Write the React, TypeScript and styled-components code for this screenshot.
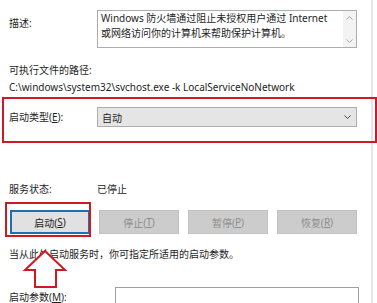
import React from 'react'
import styled, { createGlobalStyle, css } from 'styled-components'

const GlobalStyle = createGlobalStyle`
  html, body {
    margin: 0;
    padding: 0;
    background: #ffffff;
  }
  body {
    font-family: 'Noto Sans', 'Noto Sans CJK SC', sans-serif;
    font-size: 10px;
    color: #1e1e1e;
  }
`

const RED = '#cc1b24'

const Page = styled.div`
  position: relative;
  width: 377px;
  height: 303px;
  overflow: hidden;
  background: #fff;
`

const Panel = styled.div`
  width: 371px;
  height: 303px;
  border-right: 2px solid #e6e6e6;
  display: flex;
  flex-direction: column;
`

const Row = styled.div<{ $top?: number }>`
  display: flex;
  align-items: flex-start;
  padding-left: 9px;
  margin-top: ${(p) => p.$top ?? 0}px;
`

const Label = styled.div<{ $pad?: number }>`
  width: 88px;
  flex: none;
  line-height: 17px;
  padding-top: ${(p) => p.$pad ?? 0}px;
  white-space: nowrap;
`

const Line = styled.div<{ $top?: number }>`
  padding-left: 9px;
  line-height: 17px;
  margin-top: ${(p) => p.$top ?? 0}px;
  white-space: nowrap;
`

const DescBox = styled.div`
  width: 258px;
  height: 36px;
  border: 1px solid #adadad;
  display: flex;
`

const DescText = styled.div`
  flex: 1;
  padding: 0 0 0 3px;
  line-height: 15px;
  white-space: nowrap;
  overflow: hidden;
`

const ScrollBar = styled.div`
  width: 13px;
  background: #f3f3f3;
  display: flex;
  flex-direction: column;
  justify-content: space-between;
  align-items: center;
  padding: 5px 0 4px;
`

const Highlight = styled.div`
  margin: 1px 0 0 2px;
  width: 366px;
  border: 2px solid ${RED};
  padding: 8px 0 14px 5px;
  display: flex;
  align-items: center;
`

const Combo = styled.div`
  width: 258px;
  height: 18px;
  border: 1px solid #adadad;
  background: #e5e5e5;
  display: flex;
  align-items: center;
  justify-content: space-between;
  padding: 0 5px 0 4px;
  box-sizing: border-box;
  width: 260px;
  height: 20px;
`

const Separator = styled.div`
  margin: 27px 0 0 9px;
  width: 345px;
  height: 1px;
  background: #c4c4c4;
`

const ButtonRow = styled.div`
  display: flex;
  gap: 9px;
  margin: 12px 0 0 10px;
`

const Button = styled.div<{ $focused?: boolean; $annotated?: boolean }>`
  position: relative;
  width: 80px;
  height: 24px;
  box-sizing: border-box;
  display: flex;
  align-items: center;
  justify-content: center;
  ${(p) =>
    p.$focused
      ? css`
          background: #e1e1e1;
          border: 2px solid #1f6fb2;
          color: #1e1e1e;
        `
      : css`
          background: #cccccc;
          border: 1px solid #c2c2c2;
          color: #8c8c8c;
        `}
  ${(p) =>
    p.$annotated &&
    css`
      &::after {
        content: '';
        position: absolute;
        left: -7px;
        top: -10px;
        right: -3px;
        bottom: -5px;
        border: 2px solid ${RED};
      }
    `}
`

const Mnemonic = styled.span`
  text-decoration: underline;
`

const ParamBox = styled.div`
  margin-left: 18px;
  width: 242px;
  height: 30px;
  border: 1px solid #a0a0a0;
`

const ArrowMark = styled.svg`
  position: absolute;
  left: 22px;
  top: 249px;
`

const Chevron = ({ up, color, w = 7 }: { up?: boolean; color: string; w?: number }) => (
  <svg width={w} height={4} viewBox="0 0 7 4">
    <path d={up ? 'M0.5 3.5 L3.5 0.5 L6.5 3.5' : 'M0.5 0.5 L3.5 3.5 L6.5 0.5'} fill="none" stroke={color} strokeWidth="1" />
  </svg>
)

export default function App() {
  return (
    <Page>
      <GlobalStyle />
      <Panel>
        <Row $top={10}>
          <Label $pad={5}>描述:</Label>
          <DescBox>
            <DescText>
              Windows 防火墙通过阻止未授权用户通过 Internet
              <br />
              或网络访问你的计算机来帮助保护计算机。
            </DescText>
            <ScrollBar>
              <Chevron up color="#a8a8a8" />
              <Chevron color="#a8a8a8" />
            </ScrollBar>
          </DescBox>
        </Row>
        <Line $top={14}>可执行文件的路径:</Line>
        <Line>C:\windows\system32\svchost.exe -k LocalServiceNoNetwork</Line>
        <Highlight>
          <Label>
            启动类型(<Mnemonic>E</Mnemonic>):
          </Label>
          <Combo>
            <span>自动</span>
            <Chevron color="#444" />
          </Combo>
        </Highlight>
        <Separator />
        <Row $top={11}>
          <Label>服务状态:</Label>
          <span style={{ lineHeight: '17px' }}>已停止</span>
        </Row>
        <ButtonRow>
          <Button $focused $annotated>
            启动(<Mnemonic>S</Mnemonic>)
          </Button>
          <Button>
            停止(<Mnemonic>T</Mnemonic>)
          </Button>
          <Button>
            暂停(<Mnemonic>P</Mnemonic>)
          </Button>
          <Button>
            恢复(<Mnemonic>R</Mnemonic>)
          </Button>
        </ButtonRow>
        <Line $top={12}>当从此处启动服务时，你可指定所适用的启动参数。</Line>
        <Row $top={24}>
          <Label $pad={2} style={{ width: 88 }}>
            启动参数(<Mnemonic>M</Mnemonic>):
          </Label>
          <ParamBox />
        </Row>
      </Panel>
      <ArrowMark width="46" height="40" viewBox="0 0 46 40">
        <path
          d="M23 2 L43 21 L34 21 L34 38 L13 38 L13 21 L3 21 Z"
          fill="#fff"
          stroke={RED}
          strokeWidth="2"
          strokeLinejoin="miter"
        />
      </ArrowMark>
    </Page>
  )
}
